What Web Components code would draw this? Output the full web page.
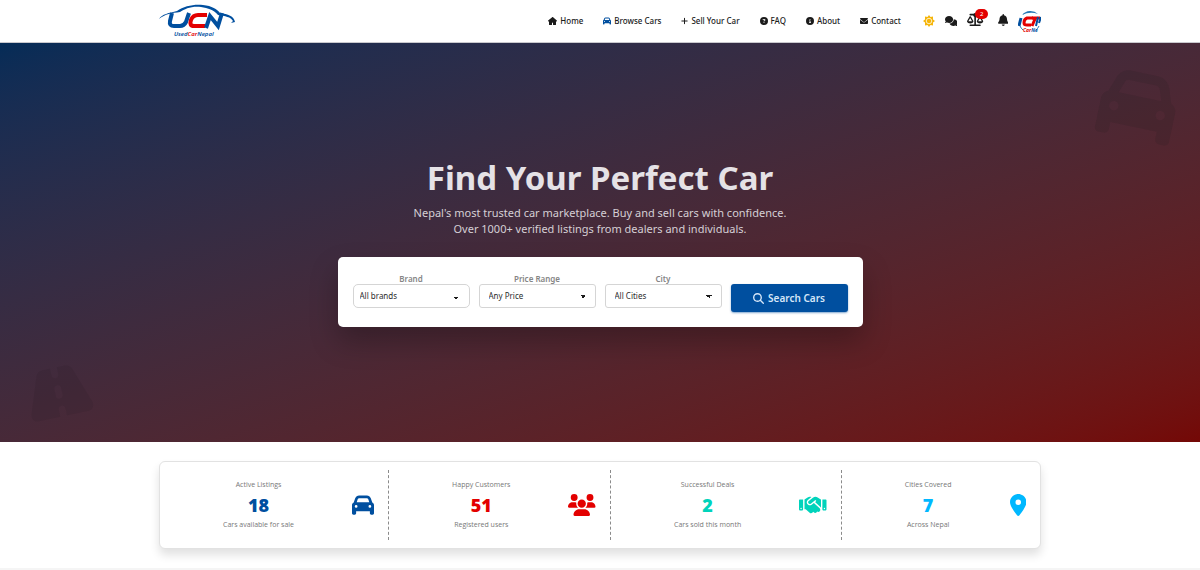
<!DOCTYPE html>
<html lang="en">
<head>
<meta charset="utf-8">
<meta name="viewport" content="width=device-width, initial-scale=1">
<title>UsedCarNepal</title>
<style>
  body { margin: 0; background: #fff; color: #1b1b1b; font-family: "Noto Sans", "Open Sans", sans-serif; }
</style>
</head>
<body>
<ucn-page></ucn-page>
<script>
const ICONS = {
  home: [576, 'M575.8 255.500c0 18-15 32.100-32 32.100h-32l.7 160.200c0 2.700-.2 5.400-.5 8.100V472c0 22.100-17.900 40-40 40H360c-22.100 0-40-17.900-40-40V376c0-17.700-14.300-32-32-32s-32 14.300-32 32v96c0 22.100-17.900 40-40 40H104c-22.100 0-40-17.900-40-40V287.600H32c-18 0-32-14-32-32.100c0-9 3-17 10-24L266.400 8c7-7 15-8 22-8s15 2 21 7L564.800 231.500c8 7 12 15 11 24z'],
  car: [512, 'M135.200 117.400L109.100 192H402.900l-26.100-74.600C372.300 104.600 360.200 96 346.600 96H165.400c-13.600 0-25.700 8.600-30.200 21.400zM39.600 196.800L74.800 96.300C88.300 57.800 124.600 32 165.400 32H346.600c40.800 0 77.100 25.800 90.600 64.300l35.200 100.500c23.200 9.600 39.600 32.500 39.600 59.200V448c0 17.700-14.300 32-32 32H448c-17.700 0-32-14.300-32-32V400H96v48c0 17.700-14.300 32-32 32H32c-17.700 0-32-14.300-32-32V256c0-26.700 16.400-49.600 39.600-59.200zM128 288a32 32 0 1 0 -64 0 32 32 0 1 0 64 0zm288 32a32 32 0 1 0 0-64 32 32 0 1 0 0 64z'],
  plus: [448, 'M256 80c0-17.700-14.300-32-32-32s-32 14.300-32 32V224H48c-17.700 0-32 14.300-32 32s14.300 32 32 32H192V432c0 17.700 14.300 32 32 32s32-14.300 32-32V288H400c17.700 0 32-14.300 32-32s-14.300-32-32-32H256V80z'],
  question: [512, 'M256 512A256 256 0 1 0 256 0a256 256 0 1 0 0 512zM169.800 165.300c7.900-22.300 29.100-37.300 52.800-37.300h58.300c34.900 0 63.100 28.300 63.100 63.100c0 22.600-12.100 43.500-31.700 54.800L280 264.400c-.2 13-10.900 23.600-24 23.600c-13.300 0-24-10.700-24-24V250.500c0-8.600 4.600-16.500 12.100-20.800l44.300-25.400c4.700-2.700 7.600-7.700 7.600-13.100c0-8.400-6.800-15.100-15.100-15.100H222.600c-3.400 0-6.400 2.100-7.500 5.300l-.4 1.200c-4.400 12.500-18.200 19-30.600 14.600s-19-18.200-14.600-30.600l.3-1.300zM224 352a32 32 0 1 1 64 0 32 32 0 1 1 -64 0z'],
  info: [512, 'M256 512A256 256 0 1 0 256 0a256 256 0 1 0 0 512zM216 336h24V272H216c-13.300 0-24-10.700-24-24s10.700-24 24-24h48c13.300 0 24 10.700 24 24v88h8c13.300 0 24 10.700 24 24s-10.700 24-24 24H216c-13.300 0-24-10.700-24-24s10.700-24 24-24zm40-208a32 32 0 1 1 0 64 32 32 0 1 1 0-64z'],
  envelope: [512, 'M48 64C21.500 64 0 85.500 0 112c0 15.100 7.100 29.300 19.200 38.400L236.800 313.600c11.400 8.500 27 8.500 38.400 0L492.800 150.400c12.100-9.100 19.200-23.300 19.200-38.400c0-26.500-21.500-48-48-48H48zM0 176V384c0 35.300 28.700 64 64 64H448c35.300 0 64-28.700 64-64V176L294.400 339.200c-22.800 17.100-54 17.100-76.800 0L0 176z'],
  comments: [640, 'M208 352c114.900 0 208-78.800 208-176S322.900 0 208 0S0 78.800 0 176c0 38.600 14.700 74.300 39.600 103.400c-3.500 9.400-8.700 17.700-14.200 24.700c-4.800 6.200-9.700 11-13.300 14.300c-10 8-14.600 14-11.300 23.200S13.300 352 20 352c21.900 0 43.900-6 62.300-13.500c8.900-3.600 17-7.600 24.200-11.700C136 343 171 352 208 352zM448 176c0 112.300-99.100 196.900-216.500 207C255.800 457.400 336.400 512 432 512c37 0 72-9 101.500-25.200c7.200 4.100 15.300 8.100 24.200 11.700C576 506 598 512 620 512c6.700 0 16.500-1.300 19.200-10.400s-1.300-15.200-11.300-23.200c-3.600-3.300-8.500-8.100-13.300-14.300c-5.500-7-10.700-15.400-14.200-24.700c24.900-29 39.600-64.700 39.600-103.400c0-92.800-84.900-168.900-192.600-175.500c.4 5.100 .6 10.300 .6 15.500z'],
  scale: [640, 'M384 32H512c17.700 0 32 14.300 32 32s-14.300 32-32 32H398.400c-5.200 25.800-22.900 47.100-46.400 57.300V448H512c17.700 0 32 14.300 32 32s-14.300 32-32 32H128c-17.700 0-32-14.300-32-32s14.300-32 32-32H288V153.300c-23.500-10.300-41.200-31.600-46.400-57.300H128c-17.700 0-32-14.300-32-32s14.300-32 32-32H256c14.600-19.400 37.800-32 64-32s49.400 12.600 64 32zM439.600 320H584.400L512 195.800 439.600 320zM512 416c-62.900 0-115.200-34-126-78.900c-2.600-11 1-22.300 6.700-32.100l95.200-163.200c5-8.600 14.200-13.800 24.100-13.800s19.100 5.300 24.100 13.800l95.200 163.200c5.700 9.800 9.300 21.100 6.700 32.100C627.200 382 574.900 416 512 416zM126.800 195.800L54.400 320H199.300L126.800 195.800zM.9 337.100c-2.600-11 1-22.300 6.700-32.100l95.200-163.200c5-8.600 14.200-13.800 24.100-13.800s19.100 5.300 24.100 13.800l95.200 163.200c5.700 9.800 9.300 21.100 6.700 32.100C242 382 189.700 416 126.800 416S11.700 382 .9 337.100z'],
  bell: [448, 'M224 0c-17.700 0-32 14.300-32 32V51.200C119 66 64 130.600 64 208v18.800c0 47-17.300 92.400-48.500 127.600l-7.400 8.300c-8.400 9.400-10.400 22.900-5.300 34.400S19.400 416 32 416H416c12.600 0 24-7.400 29.200-18.900s3.100-25-5.300-34.400l-7.400-8.300C401.300 319.200 384 273.900 384 226.800V208c0-77.400-55-142-128-156.800V32c0-17.700-14.300-32-32-32zm45.300 493.300c12-12 18.700-28.300 18.700-45.300H160c0 17 6.700 33.300 18.700 45.300s28.300 18.700 45.300 18.700s33.300-6.700 45.300-18.700z'],
  search: [512, 'M416 208c0 45.900-14.900 88.300-40 122.700L502.600 457.400c12.500 12.500 12.500 32.800 0 45.300s-32.800 12.500-45.300 0L330.700 376c-34.400 25.200-76.800 40-122.700 40C93.100 416 0 322.900 0 208S93.100 0 208 0S416 93.100 416 208zM208 352a144 144 0 1 0 0-288 144 144 0 1 0 0 288z'],
  road: [576, 'M256 32H181.200c-27.100 0-51.300 17.100-60.300 42.600L3.100 407.200C1.100 413 0 419.200 0 425.400C0 455.500 24.500 480 54.600 480H256V416c0-17.700 14.300-32 32-32s32 14.300 32 32v64H521.400c30.200 0 54.600-24.500 54.600-54.600c0-6.200-1.100-12.400-3.100-18.200L455.100 74.600C446 49.100 421.900 32 394.800 32H320V96c0 17.700-14.300 32-32 32s-32-14.300-32-32V32zm64 192v64c0 17.700-14.300 32-32 32s-32-14.300-32-32V224c0-17.700 14.300-32 32-32s32 14.300 32 32z'],
  users: [640, 'M144 0a80 80 0 1 1 0 160A80 80 0 1 1 144 0zM512 0a80 80 0 1 1 0 160A80 80 0 1 1 512 0zM0 298.700C0 239.800 47.800 192 106.700 192h42.700c15.900 0 31 3.500 44.600 9.700c-1.300 7.200-1.900 14.700-1.900 22.300c0 38.200 16.800 72.500 43.300 96H21.300C9.600 320 0 310.400 0 298.700zM405.300 320h-.7c26.600-23.500 43.300-57.800 43.300-96c0-7.600-.7-15-1.900-22.300c13.600-6.300 28.700-9.700 44.600-9.700h42.700C592.200 192 640 239.800 640 298.700c0 11.800-9.600 21.300-21.300 21.300H405.300zM224 224a96 96 0 1 1 192 0 96 96 0 1 1 -192 0zM128 485.300C128 411.700 187.700 352 261.300 352H378.700C452.300 352 512 411.700 512 485.300c0 14.700-11.900 26.700-26.700 26.700H154.700c-14.700 0-26.700-11.900-26.700-26.700z'],
  handshake: [640, 'M323.400 85.200l-96.800 78.400c-16.100 13-19.200 36.400-7 53.100c12.900 17.800 38 21.300 55.300 7.800l99.300-77.200c7-5.400 17-4.200 22.500 2.800s4.200 17-2.800 22.500l-20.900 16.200L512 316.800V128h-.7l-3.900-2.500L434.800 79c-15.300-9.800-33.200-15-51.400-15c-21.800 0-43 7.500-60 21.200zm22.800 124.400l-51.700 40.200C263 274.300 217.300 268 193.700 235.600c-22.200-30.500-16.600-73.100 12.700-96.800l83.200-67.300c-11.600-4.900-24.100-7.400-36.800-7.400C234 64 215.700 69.600 200 80l-72 48V352h28.200l91.400 83.400c19.600 17.900 49.900 16.500 67.800-3.100c5.500-6.100 9.200-13.200 11.100-20.600l17 15.600c19.500 17.900 49.900 16.600 67.800-2.900c4.500-4.900 7.800-10.600 9.900-16.500c19.400 13 45.800 10.300 62.100-7.500c17.900-19.500 16.600-49.900-2.900-67.800l-134.200-123zM16 128c-8.800 0-16 7.200-16 16V352c0 17.700 14.300 32 32 32H64c17.700 0 32-14.300 32-32V128H16zM48 320a16 16 0 1 1 0 32 16 16 0 1 1 0-32zM544 128V352c0 17.700 14.300 32 32 32h32c17.700 0 32-14.300 32-32V144c0-8.800-7.200-16-16-16H544zm32 208a16 16 0 1 1 32 0 16 16 0 1 1 -32 0z'],
  pin: [384, 'M215.700 499.200C267 435 384 279.400 384 192C384 86 298 0 192 0S0 86 0 192c0 87.400 117 243 168.300 307.200c12.300 15.300 35.100 15.300 47.400 0zM192 128a64 64 0 1 1 0 128 64 64 0 1 1 0-128z']
};

function define(name, html, ready) {
  const template = document.createElement('template');
  template.innerHTML = html;
  customElements.define(name, class extends HTMLElement {
    constructor() {
      super();
      this.attachShadow({ mode: 'open' }).append(template.content.cloneNode(true));
    }
    connectedCallback() { if (ready) ready(this, this.shadowRoot); }
  });
}

/* Solid icon; its height is the --icon custom property. */
define('ucn-icon', `
<style>
  :host { display: inline-flex; flex: none; }
  svg { display: block; height: var(--icon, 10px); width: auto; fill: currentColor; fill-rule: evenodd; }
</style>
<svg aria-hidden="true"><path/></svg>`, (el, root) => {
  const [width, d] = ICONS[el.getAttribute('name')];
  root.querySelector('svg').setAttribute('viewBox', '0 0 ' + width + ' 512');
  root.querySelector('path').setAttribute('d', d);
});

define('ucn-logo', `
<style>
  :host { display: block; }
  a, svg { display: block; }
  text { font-family: "Noto Sans", sans-serif; font-weight: 600; font-style: italic; }
</style>
<a href="#" aria-label="UsedCarNepal">
<svg width="76" height="34" viewBox="0 0 76 34">
  <path d="M0 15C3 10 10 9 18 7C25 2 35 0 44 1C53 2 58 5 61 9C69 10 75 12 76 18L72 19L74 17C72 13 66 12 59 11C55 6 49 4 42 3C32 2 26 5 21 8C13 9 6 10 0 15Z" fill="#004f9f"/>
  <g fill="none" stroke-width="4">
    <path d="M13 9L11 17Q10 22 15 22H21Q25 22 27 18L30 9" stroke="#004f9f"/>
    <path d="M48 11H39Q34 11 32 16Q30 22 35 22H46" stroke="#e30000"/>
    <path d="M47 24L51 12L59 22L63 9" stroke="#004f9f"/>
  </g>
  <text x="15" y="32" font-size="6" fill="#004f9f">Used<tspan fill="#e30000">Car</tspan>Nepal</text>
</svg></a>`);

define('ucn-avatar', `
<style>
  button { display: block; padding: 0; border: 0; background: none; }
  :host, svg { display: block; }
  text { font-family: "Noto Sans", sans-serif; font-weight: 700; font-style: italic; }
</style>
<button aria-label="Account">
<svg width="23" height="24" viewBox="0 0 23 24">
  <path d="M4 6A11 11 0 0 1 20 5Q12 2 4 6Z" fill="#2878b5"/>
  <path d="M2 17A11 11 0 0 0 5 21M21 17A11 11 0 0 1 18 21" stroke="#2878b5" fill="none"/>
  <g fill="none" stroke-width="3">
    <path d="M3 9L1 17" stroke="#004f9f"/>
    <path d="M15 9H9Q6 10 6 14Q6 16 9 16H13" stroke="#e30000"/>
    <path d="M14 9H22M17 10L14 17" stroke="#e30000"/>
    <path d="M20 8L18 17M23 8L21 14" stroke="#004f9f" stroke-width="2"/>
  </g>
  <text x="5" y="23" font-size="5" fill="#004f9f"><tspan fill="#e30000">Car</tspan>Ne</text>
</svg></button>`);

define('ucn-nav-link', `
<style>
  :host { display: block; }
  a { display: flex; align-items: center; gap: 3px; color: inherit; text-decoration: none; font-size: 8px; line-height: 12px; font-weight: 500; white-space: nowrap; --icon: 8px; }
  :host([active]) slot[name="icon"] { color: #004f9f; }
</style>
<a href="#"><slot name="icon"></slot><slot></slot></a>`);

define('ucn-header', `
<style>
  :host { display: block; background: #fff; border-bottom: 1px solid #c9c9ce; }
  header { display: flex; align-items: center; justify-content: space-between; box-sizing: border-box; width: 74%; max-width: 882px; margin: 0 auto; height: 42px; }
  .right, nav, .tools { display: flex; align-items: center; }
  nav { gap: 20px; }
  .right { gap: 22px; }
  .tools { gap: 10px; }
  button { position: relative; display: block; padding: 0; border: 0; background: none; color: #1b1b1b; }
  .sun { color: #f5b50a; }
  .sun svg { display: block; }
  .comments { --icon: 10px; }
  .scale { --icon: 13px; }
  .bell { --icon: 12px; margin-left: 4px; }
  .badge { position: absolute; left: 8px; top: -4px; width: 13px; height: 10px; border-radius: 5px; background: #e30000; color: #fff; font: 6px/10px "Noto Sans", sans-serif; text-align: center; }
</style>
<header>
  <ucn-logo></ucn-logo>
  <div class="right">
    <nav aria-label="Main">
      <ucn-nav-link><ucn-icon slot="icon" name="home"></ucn-icon>Home</ucn-nav-link>
      <ucn-nav-link active><ucn-icon slot="icon" name="car"></ucn-icon>Browse Cars</ucn-nav-link>
      <ucn-nav-link><ucn-icon slot="icon" name="plus"></ucn-icon>Sell Your Car</ucn-nav-link>
      <ucn-nav-link><ucn-icon slot="icon" name="question"></ucn-icon>FAQ</ucn-nav-link>
      <ucn-nav-link><ucn-icon slot="icon" name="info"></ucn-icon>About</ucn-nav-link>
      <ucn-nav-link><ucn-icon slot="icon" name="envelope"></ucn-icon>Contact</ucn-nav-link>
    </nav>
    <div class="tools">
      <button class="sun" aria-label="Theme"><svg width="12" height="12" viewBox="0 0 24 24"><path fill="currentColor" d="M12 0L15 4L20 3L20 9L24 12L20 15L20 21L15 20L12 24L9 20L4 21L4 15L0 12L4 9L4 3L9 4Z"/><circle cx="12" cy="12" r="5.500" fill="currentColor" stroke="#fff" stroke-width="1.500"/></svg></button>
      <button class="comments" aria-label="Messages"><ucn-icon name="comments"></ucn-icon></button>
      <button class="scale" aria-label="Compare"><ucn-icon name="scale"></ucn-icon><span class="badge">2</span></button>
      <button class="bell" aria-label="Notifications"><ucn-icon name="bell"></ucn-icon></button>
      <ucn-avatar></ucn-avatar>
    </div>
  </div>
</header>`);

define('ucn-select', `
<style>
  :host { display: block; min-width: 0; }
  label { display: block; padding-top: 2px; text-align: center; font-size: 8px; line-height: 10px; font-weight: 600; color: #858585; }
  select { display: block; appearance: none; box-sizing: border-box; width: 100%; height: 24px; margin: 0; padding: 0 9px; border: 1px solid #d5d5d5; border-radius: 3px; color: #2b2b2b; font: 8px/12px "Noto Sans", sans-serif;
    background: linear-gradient(45deg, transparent 50%, #1b1b1b 50%) right 12px top 10px / 3px 3px no-repeat, linear-gradient(135deg, #1b1b1b 50%, transparent 50%) right 9px top 10px / 3px 3px no-repeat, #fff; }
  :host([combo]) select { padding: 0 6px; border-radius: 5px; background-position: right 13px top 12px, right 11px top 12px; background-size: 2px 3px; }
</style>
<label for="field"></label>
<select id="field"><option></option></select>`, (el, root) => {
  root.querySelector('label').textContent = el.getAttribute('label');
  root.querySelector('option').textContent = el.getAttribute('value');
});

define('ucn-search', `
<style>
  :host { display: block; box-sizing: border-box; width: 100%; max-width: 525px; padding: 15px; border-radius: 5px; background: #fff; box-shadow: 0 14px 28px rgba(0, 0, 0, .25); }
  form { display: grid; grid-template-columns: repeat(4, 1fr); gap: 9px; margin: 0; }
  button { display: flex; align-items: center; justify-content: center; gap: 4px; align-self: end; height: 28px; margin-top: 12px; padding: 0; border: 0; border-radius: 3px; background: #004f9f; color: #d5e6f8; font: 600 10px/14px "Noto Sans", sans-serif; --icon: 11px; box-shadow: 0 1px 2px rgba(0, 79, 159, .5); }
</style>
<form>
  <ucn-select combo label="Brand" value="All brands"></ucn-select>
  <ucn-select label="Price Range" value="Any Price"></ucn-select>
  <ucn-select label="City" value="All Cities"></ucn-select>
  <button type="button"><ucn-icon name="search"></ucn-icon>Search Cars</button>
</form>`);

define('ucn-hero', `
<style>
  :host { display: flex; flex-direction: column; align-items: center; justify-content: center; position: relative; overflow: hidden; padding: 115px 16px; background: linear-gradient(to bottom right in oklab, #052c57, #740806); color: #e5e2e6; text-align: center; }
  h1 { margin: 0; font-size: 33px; line-height: 40px; font-weight: 700; }
  p { margin: 7px 0 20px; max-width: 400px; font-size: 11px; line-height: 16px; color: #d5cfd5; }
  .car, .road { position: absolute; }
  .car { top: 25px; right: 24px; --icon: 76px; transform: rotate(12deg); color: rgba(30, 25, 30, .14); }
  .road { bottom: 22px; left: 27px; --icon: 56px; transform: rotate(-12deg); color: rgba(30, 25, 30, .12); }
</style>
<ucn-icon class="car" name="car"></ucn-icon>
<ucn-icon class="road" name="road"></ucn-icon>
<h1>Find Your Perfect Car</h1>
<p>Nepal's most trusted car marketplace. Buy and sell cars with confidence. Over 1000+ verified listings from dealers and individuals.</p>
<ucn-search></ucn-search>`);

define('ucn-stat', `
<style>
  :host { display: grid; grid-template-columns: 1fr auto; align-items: center; column-gap: 9px; padding: 9px 14px; text-align: center; border-right: 1px dashed #8b8b8b; }
  :host(:last-of-type) { border-right: 0; }
  .text { font-family: "Open Sans", sans-serif; font-size: 7px; line-height: 12px; color: #777; white-space: nowrap; }
  strong { display: block; margin: 2px 0; font-family: "Noto Sans", sans-serif; font-size: 18px; line-height: 24px; font-weight: 900; color: var(--tone); }
  .figure { display: flex; color: var(--tone); }
</style>
<div class="text"><slot name="title"></slot><strong><slot></slot></strong><slot name="note"></slot></div>
<div class="figure"><slot name="icon"></slot></div>`);

define('ucn-stats', `
<style>
  :host { display: block; padding: 19px 0; border-bottom: 2px solid #f5f5f5; background: #fff; }
  section { display: grid; grid-auto-flow: column; box-sizing: border-box; width: 74%; max-width: 882px; margin: 0 auto; padding: 8px 0; border: 1px solid #e2e2e2; border-radius: 6px; background: #fff; box-shadow: 0 6px 10px rgba(0, 0, 0, .12); --icon: 22px; }
  .blue { --tone: #004f9f; }
  .red { --tone: #e30000; }
  .teal { --tone: #00d3bb; }
  .sky { --tone: #00b8ff; }
</style>
<section aria-label="Statistics">
  <ucn-stat class="blue"><span slot="title">Active Listings</span>18<span slot="note">Cars available for sale</span><ucn-icon slot="icon" name="car"></ucn-icon></ucn-stat>
  <ucn-stat class="red"><span slot="title">Happy Customers</span>51<span slot="note">Registered users</span><ucn-icon slot="icon" name="users"></ucn-icon></ucn-stat>
  <ucn-stat class="teal"><span slot="title">Successful Deals</span>2<span slot="note">Cars sold this month</span><ucn-icon slot="icon" name="handshake"></ucn-icon></ucn-stat>
  <ucn-stat class="sky"><span slot="title">Cities Covered</span>7<span slot="note">Across Nepal</span><ucn-icon slot="icon" name="pin"></ucn-icon></ucn-stat>
</section>`);

define('ucn-page', `
<style>
  :host, main { display: block; }
</style>
<ucn-header></ucn-header>
<main>
  <ucn-hero></ucn-hero>
  <ucn-stats></ucn-stats>
</main>`);
</script>
</body>
</html>
